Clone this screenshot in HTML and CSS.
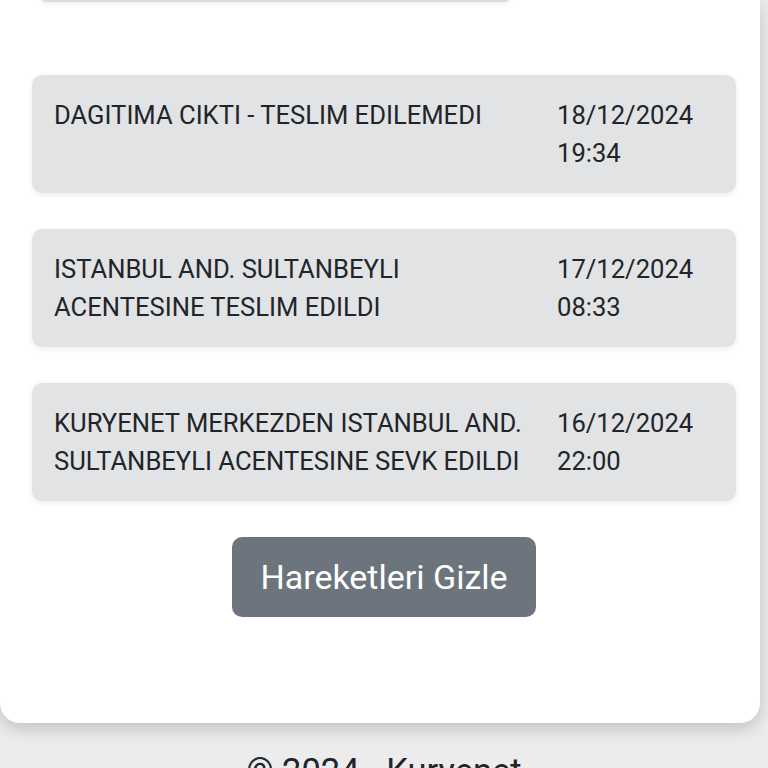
FILE: index.html
```html
<!DOCTYPE html>
<html lang="tr">
<head>
<meta charset="utf-8">
<title>Kuryenet - Hareketler</title>
<link rel="stylesheet" href="styles.css">
</head>
<body>
<div class="page">
  <main class="card">
    <div class="top-box"></div>
    <div class="moves">
      <div class="move">
        <div class="move-text">DAGITIMA CIKTI - TESLIM EDILEMEDI</div>
        <div class="move-date">18/12/2024<br>19:34</div>
      </div>
      <div class="move">
        <div class="move-text">ISTANBUL AND. SULTANBEYLI ACENTESINE TESLIM EDILDI</div>
        <div class="move-date">17/12/2024<br>08:33</div>
      </div>
      <div class="move">
        <div class="move-text">KURYENET MERKEZDEN ISTANBUL AND. SULTANBEYLI ACENTESINE SEVK EDILDI</div>
        <div class="move-date">16/12/2024<br>22:00</div>
      </div>
    </div>
    <div class="actions">
      <button class="btn-hide" type="button">Hareketleri Gizle</button>
    </div>
  </main>
  <footer class="footer">© 2024 - Kuryenet</footer>
</div>
</body>
</html>
```

FILE: styles.css
```css
html, body {
  margin: 0;
  padding: 0;
}
body {
  background: #ececec;
  font-family: Roboto, "Liberation Sans", Arial, sans-serif;
  color: #212529;
  overflow: hidden;
}
.page {
  width: 760px;
  display: flex;
  flex-direction: column;
}
.card {
  background: #ffffff;
  border-radius: 0 0 20px 20px;
  box-shadow: 0 6px 16px rgba(0, 0, 0, 0.18);
  padding: 0 24px 106px 32px;
  display: flex;
  flex-direction: column;
}
.top-box {
  margin: -40px 0 0 7px;
  width: 473px;
  height: 40px;
  background: #ffffff;
  border-radius: 0 0 8px 8px;
  border-bottom: 2px solid #dcdcdc;
  box-shadow: 0 2px 4px rgba(0, 0, 0, 0.06);
}
.moves {
  margin-top: 73px;
  display: flex;
  flex-direction: column;
  gap: 36px;
}
.move {
  background: #e2e3e5;
  border-radius: 10px;
  box-shadow: 0 2px 6px rgba(0, 0, 0, 0.08);
  padding: 21px 22px;
  display: grid;
  grid-template-columns: 1fr 157px;
  font-size: 25.6px;
  line-height: 38px;
  min-height: 76px;
}
.move-text {
  padding-right: 20px;
}
.actions {
  display: flex;
  justify-content: center;
  margin-top: 36px;
}
.btn-hide {
  background: #6c757d;
  color: #ffffff;
  border: none;
  border-radius: 10px;
  font-family: Roboto, "Liberation Sans", Arial, sans-serif;
  font-size: 34px;
  height: 80px;
  padding: 0;
  width: 304px;
}
.footer {
  text-align: center;
  font-size: 34.5px;
  color: #212529;
  padding-top: 28px;
  padding-left: 8px;
}
```
